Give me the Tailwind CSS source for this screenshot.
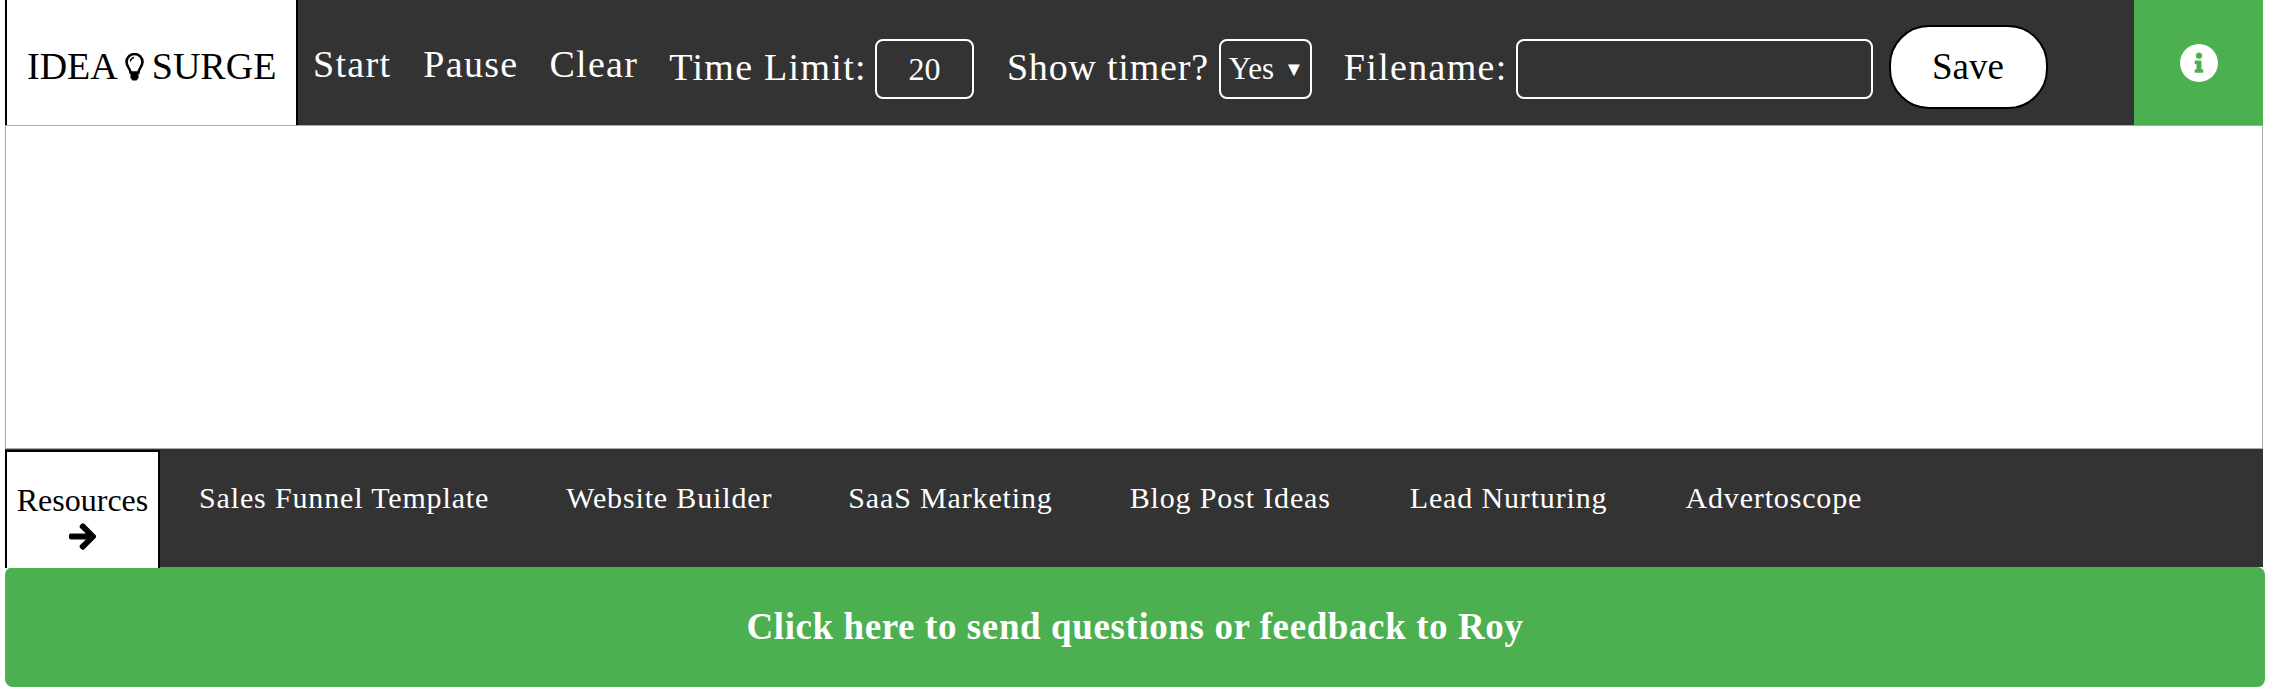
<!DOCTYPE html>
<html><head><meta charset="utf-8"><script src="https://cdn.jsdelivr.net/npm/@tailwindcss/browser@4"></script></head>
<body class="bg-white font-['Liberation_Serif',serif]">
<div class="pl-[5px] w-[2270px] h-[693px] overflow-hidden">
  <header class="flex h-[126px] w-[2258px] bg-[#333333] border-b border-[#aaaaaa] text-white items-stretch">
    <div class="w-[293px] bg-white border-l-2 border-r-2 border-black text-black flex items-center pl-[20px] pt-[8px] text-[38px] h-[125px] shrink-0">
      <span>IDEA</span>
      <svg class="w-[21px] h-[28px] ml-[6px] mr-[7px]" viewBox="0 0 20 28"><path d="M6 19.500C6 15.500 2 14 2 9a8 8 0 0 1 16 0c0 5-4 6.500-4 10.500z" fill="none" stroke="#000" stroke-width="2.600"/><path d="M6 19.500h8v5.500l-2 2.500h-4l-2-2.500z" fill="#000"/><path d="M9.500 4.500C7.500 5 6 6.500 6 8.500" fill="none" stroke="#000" stroke-width="1.500"/></svg>
      <span>SURGE</span>
    </div>
    <nav class="flex items-center text-[38px] tracking-[1.300px] h-[125px] pt-[3px]">
      <a class="ml-[15px]">Start</a><a class="ml-[32px]">Pause</a><a class="ml-[31px]">Clear</a>
    </nav>
    <div class="flex items-center h-[125px] text-[38px] tracking-[1.300px] pt-[16px] pb-[3px]">
      <label class="ml-[31px] mb-[3px]">Time Limit:</label>
      <div class="ml-[8px] w-[99px] h-[60px] border-2 border-white rounded-[8px] flex items-center justify-center text-[32px] tracking-normal">20</div>
      <label class="ml-[33px] mb-[3px] tracking-[0.800px]">Show timer?</label>
      <div class="ml-[10px] w-[93px] h-[60px] border-2 border-white rounded-[8px] flex items-center pl-[8px] text-[31px] tracking-normal">Yes<span class="ml-[10px] text-[20px]">▼</span></div>
      <label class="ml-[32px] mb-[3px]">Filename:</label>
      <div class="ml-[8px] w-[357px] h-[60px] border-2 border-white rounded-[8px]"></div>
    </div>
    <div class="flex items-center h-[125px] pt-[8px]">
      <button class="ml-[16px] w-[159px] h-[84px] bg-white text-black text-[37px] border-2 border-black rounded-[40px]">Save</button>
    </div>
    <div class="ml-auto w-[129px] h-[125px] bg-[#4caf50] flex items-center justify-center">
      <svg class="w-[38px] h-[38px]" viewBox="8 8 496 496"><path fill="#fff" d="M256 8C119.043 8 8 119.083 8 256c0 136.997 111.043 248 248 248s248-111.003 248-248C504 119.083 392.957 8 256 8zm0 110c23.196 0 42 18.804 42 42s-18.804 42-42 42-42-18.804-42-42 18.804-42 42-42zm56 254c0 6.627-5.373 12-12 12h-88c-6.627 0-12-5.373-12-12v-24c0-6.627 5.373-12 12-12h12v-64h-12c-6.627 0-12-5.373-12-12v-24c0-6.627 5.373-12 12-12h64c6.627 0 12 5.373 12 12v100h12c6.627 0 12 5.373 12 12v24z"/></svg>
    </div>
  </header>
  <main class="h-[323px] w-[2258px] bg-white border-l border-r border-b border-[#aaaaaa]"></main>
  <section class="flex h-[118px] w-[2258px] bg-[#333333] text-white text-[30px] tracking-[0.850px]">
    <div class="w-[155px] h-[118px] shrink-0 mt-[1px] bg-white text-black border-2 border-b-0 border-black flex flex-col items-center pt-[29px] tracking-normal leading-[38px] text-[32px]">
      <span>Resources</span>
      <svg class="w-[27px] h-[29px] mt-[3px]" viewBox="-10 22 468 468"><path stroke="#000" stroke-width="22" d="M190.500 66.900l22.200-22.200c9.400-9.400 24.600-9.400 33.900 0L441 239c9.400 9.400 9.400 24.600 0 33.900L246.600 467.300c-9.400 9.400-24.600 9.400-33.900 0l-22.200-22.200c-9.500-9.500-9.300-25 .4-34.300L311.400 296H24c-13.300 0-24-10.700-24-24v-32c0-13.300 10.700-24 24-24h287.400L190.900 101.200c-9.800-9.300-10-24.800-.4-34.300z"/></svg>
    </div>
    <nav class="flex items-start pt-[28px]">
      <a class="ml-[39px] leading-[42px]">Sales Funnel Template</a>
      <a class="ml-[77px] leading-[42px]">Website Builder</a>
      <a class="ml-[76px] leading-[42px]">SaaS Marketing</a>
      <a class="ml-[77px] leading-[42px]">Blog Post Ideas</a>
      <a class="ml-[79px] leading-[42px]">Lead Nurturing</a>
      <a class="ml-[78px] leading-[42px]">Advertoscope</a>
    </nav>
  </section>
  <button class="block w-[2260px] h-[120px] bg-[#4caf50] text-white rounded-[8px] font-bold text-[37px] tracking-[0.600px] text-center">Click here to send questions or feedback to Roy</button>
</div>
</body></html>
